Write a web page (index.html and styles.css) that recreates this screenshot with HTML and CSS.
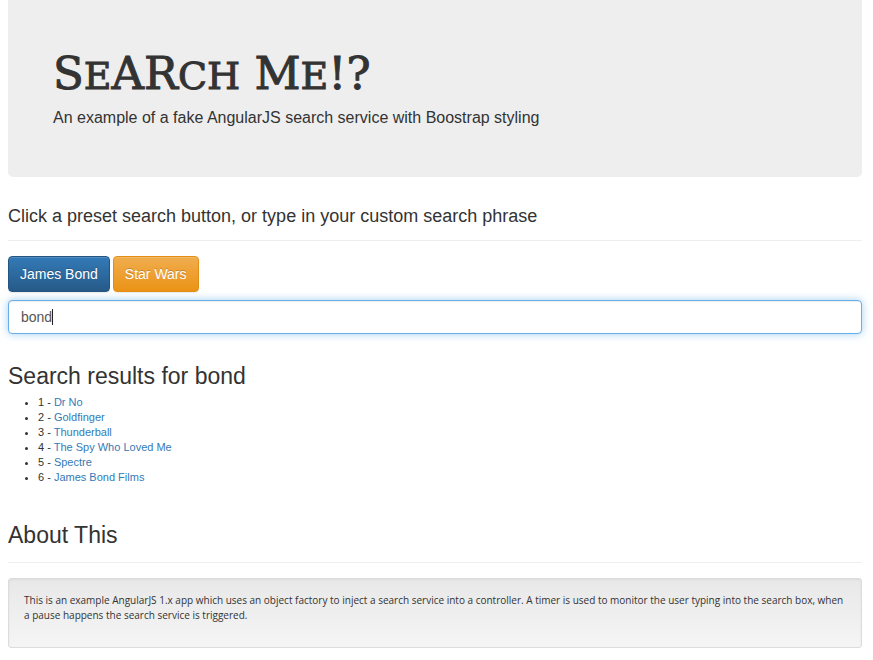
FILE: index.html
```html
<!DOCTYPE html>
<html lang="en">
<head>
<meta charset="utf-8">
<meta name="viewport" content="width=device-width, initial-scale=1">
<title>SeARch Me!?</title>
<link rel="stylesheet" href="styles.css">
</head>
<body>
<main class="container">
  <header class="jumbotron">
    <h1 class="title">S<span class="low">e</span>AR<span class="low">ch</span> M<span class="low">e</span>!?</h1>
    <p class="lead">An example of a fake AngularJS search service with Boostrap styling</p>
  </header>
  <section class="search">
    <h2 class="prompt"><label for="phrase">Click a preset search button, or type in your custom search phrase</label></h2>
    <div class="presets">
      <button type="button" class="btn btn-primary">James Bond</button>
      <button type="button" class="btn btn-warning">Star Wars</button>
    </div>
    <div class="field">
      <input class="form-control" id="phrase" type="text" value="bond">
      <span class="caret"></span>
    </div>
  </section>
  <section class="results">
    <h2 class="heading">Search results for bond</h2>
    <ul class="result-list">
      <li>1 - <a href="#">Dr No</a></li>
      <li>2 - <a href="#">Goldfinger</a></li>
      <li>3 - <a href="#">Thunderball</a></li>
      <li>4 - <a href="#">The Spy Who Loved Me</a></li>
      <li>5 - <a href="#">Spectre</a></li>
      <li>6 - <a href="#">James Bond Films</a></li>
    </ul>
  </section>
  <section class="about">
    <h2 class="heading ruled">About This</h2>
    <div class="well">
      <p>This is an example AngularJS 1.x app which uses an object factory to inject a search service into a controller. A timer is used to monitor the user typing into the search box, when a pause happens the search service is triggered.</p>
    </div>
  </section>
</main>
</body>
</html>
```
FILE: styles.css
```css
* { box-sizing: border-box; }
body {
  margin: 0;
  background: #fff;
  color: #333;
  font: 11px/15px "Liberation Sans", Arial, sans-serif;
}
.container { padding: 0 11px 12px 8px; }
h1, h2, p, ul { margin: 0; font-weight: 400; }
.jumbotron {
  padding: 49px 45px 48px;
  background: #eee;
  border-radius: 0 0 5px 5px;
}
.title {
  margin-bottom: 8px;
  font: 45px/50px "DejaVu Serif", serif;
  -webkit-text-stroke: 1px #333;
}
.low { font-size: 38px; line-height: 40px; text-transform: uppercase; }
.lead { font-size: 16px; line-height: 22px; }
.prompt {
  padding: 29px 0 14px;
  border-bottom: 1px solid #eee;
  font-size: 18px;
  line-height: 20px;
}
.presets { display: flex; gap: 3px; padding: 15px 0 8px; }
.btn {
  height: 36px;
  padding: 0 11px;
  border: 1px solid;
  border-radius: 4px;
  color: #fff;
  font: 14px/20px "Liberation Sans", Arial, sans-serif;
  text-shadow: 0 -1px 0 rgba(0, 0, 0, .2);
  box-shadow: inset 0 1px 0 rgba(255, 255, 255, .15), 0 1px 1px rgba(0, 0, 0, .08);
}
.btn-primary { border-color: #245580; background: linear-gradient(#337ab7, #265a88); }
.btn-warning { border-color: #e38d13; background: linear-gradient(#f0ad4e, #eb9316); }
.field { position: relative; }
.form-control {
  display: block;
  width: 100%;
  height: 34px;
  padding: 6px 12px;
  border: 1px solid #66afe9;
  border-radius: 4px;
  outline: 0;
  background: #fff;
  color: #555;
  font: 14px/20px "Liberation Sans", Arial, sans-serif;
  box-shadow: inset 0 1px 1px rgba(0, 0, 0, .075), 0 0 8px rgba(102, 175, 233, .6);
}
.caret {
  position: absolute;
  top: 9px;
  left: 44px;
  width: 1px;
  height: 16px;
  background: #222;
}
.heading { font-size: 23px; line-height: 26px; }
.results { padding-top: 29px; }
.result-list { margin-top: 6px; padding-left: 30px; }
.result-list a { color: #337ab7; text-decoration: none; }
.about { padding-top: 37px; }
.ruled { padding-bottom: 14px; border-bottom: 1px solid #eee; }
.well {
  margin-top: 15px;
  padding: 14px 15px 24px;
  border: 1px solid #dcdcdc;
  border-radius: 3px;
  background: linear-gradient(#e8e8e8, #f5f5f5);
  box-shadow: inset 0 1px 3px rgba(0, 0, 0, .05), 0 1px 0 rgba(255, 255, 255, .1);
  font-family: "Open Sans", Arial, sans-serif;
  font-size: 10px;
}
```
